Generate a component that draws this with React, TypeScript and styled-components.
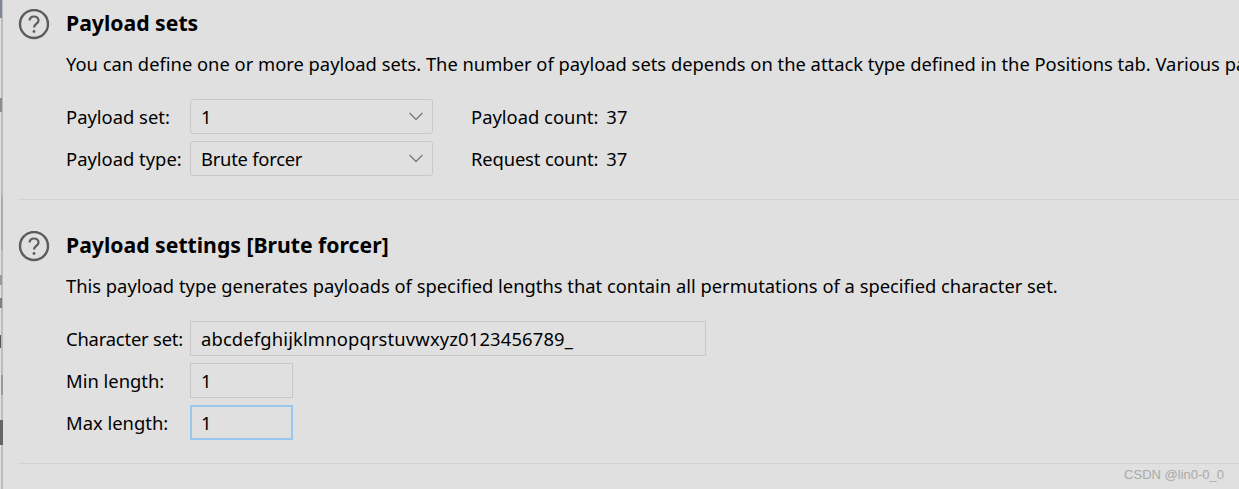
import React from 'react'
import styled, { createGlobalStyle } from 'styled-components'

const GlobalStyle = createGlobalStyle`
  html, body {
    margin: 0;
    padding: 0;
    background: #e0e0e0;
    overflow: hidden;
  }
`

const Page = styled.div`
  position: relative;
  width: 1239px;
  height: 489px;
  box-sizing: border-box;
  overflow: hidden;
  padding: 9px 0 0 18px;
  background: #e0e0e0;
  color: #000;
  font-family: "Noto Sans", "Open Sans", sans-serif;
  font-size: 18.4px;
`

const LeftEdge = styled.svg`
  position: absolute;
  left: 0;
  top: 0;
`

const Section = styled.section<{ $height: number }>`
  display: grid;
  grid-template-columns: 48px 1fr;
  height: ${props => props.$height}px;
  box-sizing: border-box;
  border-bottom: 1px solid #d2d2d2;
  margin-bottom: 31px;
  white-space: nowrap;
`

const HelpCircle = styled.svg`
  display: block;
  width: 32px;
  height: 32px;
`

const Body = styled.div`
  min-width: 0;
`

const Title = styled.h2`
  margin: 0;
  height: 30px;
  line-height: 28px;
  font-size: 21.2px;
  font-weight: 700;
`

const Description = styled.p`
  margin: 10px 0 0;
  height: 30px;
  line-height: 30px;
  font-size: 18.35px;
`

const Fields = styled.div`
  display: flex;
  flex-direction: column;
  gap: 7px;
  margin-top: 20px;
`

const Row = styled.div`
  display: flex;
  align-items: center;
  height: 35px;
`

const Label = styled.span<{ $tracking?: number }>`
  width: 124px;
  flex: none;
  letter-spacing: ${props => props.$tracking ?? 0}px;
`

const Select = styled.div<{ $tracking?: number }>`
  display: flex;
  align-items: center;
  justify-content: space-between;
  box-sizing: border-box;
  width: 243px;
  height: 35px;
  padding: 0 9px 0 10px;
  border: 1px solid #cbc7c7;
  border-radius: 3px;
  letter-spacing: ${props => props.$tracking ?? 0}px;
`

const Input = styled.div<{ $width: number; $focused?: boolean; $tracking?: number }>`
  display: flex;
  align-items: center;
  box-sizing: border-box;
  width: ${props => props.$width}px;
  height: 35px;
  padding-left: ${props => (props.$focused ? 9 : 10)}px;
  border: ${props => (props.$focused ? '2px solid #9cc6f2' : '1px solid #cbc7c7')};
  letter-spacing: ${props => props.$tracking ?? 0}px;
`

const Stat = styled.span<{ $tracking?: number }>`
  margin-left: 38px;
  letter-spacing: ${props => props.$tracking ?? 0}px;
`

const Count = styled.span`
  margin-left: 8px;
`

const Watermark = styled.span`
  position: absolute;
  right: 15px;
  bottom: 7px;
  font-family: "Liberation Sans", sans-serif;
  font-size: 13px;
  color: #a9a9a9;
`

function Help() {
  return (
    <HelpCircle viewBox="0 0 32 32" fill="none" stroke="#5c5c5c">
      <circle cx="16" cy="15" r="14" strokeWidth="2.4" />
      <path d="M11.5 11.5c.3-2.6 2.2-4 4.5-4 2.6 0 4.5 1.6 4.5 3.9 0 3.6-4.5 3.5-4.5 7.1" strokeWidth="2.2" />
      <circle cx="16" cy="22.5" r="1.4" fill="#5c5c5c" stroke="none" />
    </HelpCircle>
  )
}

function Chevron() {
  return (
    <svg width="14" height="9" viewBox="0 0 14 9" fill="none" stroke="#6e6e6e" strokeWidth="1.1">
      <path d="M.5 1l6.5 6.5L13.5 1" />
    </svg>
  )
}

// the sliver of the neighbouring pane that shows along the left side
function Edge() {
  return (
    <LeftEdge width="3" height="489" viewBox="0 0 3 489">
      <rect x="1" width="2" height="489" fill="#bcbcbc" />
      <rect x="1" y="195" width="2" height="55" fill="#adadad" />
      <rect width="2" height="18" fill="#7f8794" />
      <rect y="98" width="2" height="14" fill="#8c8c8c" />
      <rect y="275" width="2" height="10" fill="#9a9a9a" />
      <rect y="298" width="2" height="10" fill="#7f7f7f" />
      <rect y="335" width="1" height="13" fill="#555" />
      <rect x="1" y="375" width="2" height="20" fill="#999" />
      <rect y="420" width="3" height="25" fill="#666" />
    </LeftEdge>
  )
}

export default function App() {
  return (
    <>
      <GlobalStyle />
      <Page>
        <Edge />
        <Section $height={191}>
          <Help />
          <Body>
            <Title>Payload sets</Title>
            <Description>
              You can define one or more payload sets. The number of payload sets depends on the attack type defined in the Positions tab. Various payload types are available for each payload set.
            </Description>
            <Fields>
              <Row>
                <Label>Payload set:</Label>
                <Select>1<Chevron /></Select>
                <Stat>Payload count:</Stat>
                <Count>37</Count>
              </Row>
              <Row>
                <Label>Payload type:</Label>
                <Select $tracking={-0.25}>Brute forcer<Chevron /></Select>
                <Stat $tracking={-0.15}>Request count:</Stat>
                <Count>37</Count>
              </Row>
            </Fields>
          </Body>
        </Section>
        <Section $height={233}>
          <Help />
          <Body>
            <Title>Payload settings [Brute forcer]</Title>
            <Description>
              This payload type generates payloads of specified lengths that contain all permutations of a specified character set.
            </Description>
            <Fields>
              <Row>
                <Label $tracking={-0.2}>Character set:</Label>
                <Input $width={516} $tracking={0.14}>abcdefghijklmnopqrstuvwxyz0123456789_</Input>
              </Row>
              <Row>
                <Label>Min length:</Label>
                <Input $width={103}>1</Input>
              </Row>
              <Row>
                <Label>Max length:</Label>
                <Input $width={103} $focused>1</Input>
              </Row>
            </Fields>
          </Body>
        </Section>
        <Watermark>CSDN @lin0-0_0</Watermark>
      </Page>
    </>
  )
}
